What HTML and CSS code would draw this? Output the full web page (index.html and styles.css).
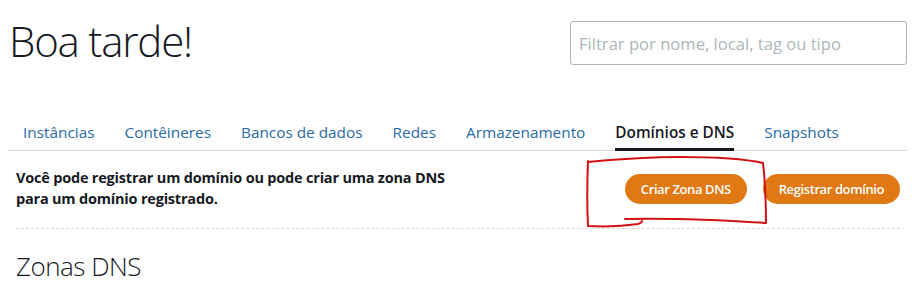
FILE: index.html
```html
<!DOCTYPE html>
<html lang="pt-BR">
<head>
<meta charset="utf-8">
<title>Lightsail - Domínios e DNS</title>
<link rel="stylesheet" href="styles.css">
</head>
<body>
<div class="page">
  <header class="header">
    <h1 class="greeting">Boa tarde!</h1>
    <input class="search" type="text" placeholder="Filtrar por nome, local, tag ou tipo">
  </header>
  <nav class="tabs">
    <a class="tab">Instâncias</a>
    <a class="tab">Contêineres</a>
    <a class="tab">Bancos de dados</a>
    <a class="tab">Redes</a>
    <a class="tab">Armazenamento</a>
    <a class="tab active">Domínios e DNS</a>
    <a class="tab">Snapshots</a>
  </nav>
  <section class="panel">
    <div class="intro">
      <p class="intro-text">Você pode registrar um domínio ou pode criar uma zona DNS<br>para um domínio registrado.</p>
      <div class="actions">
        <button class="btn">Criar Zona DNS</button>
        <button class="btn">Registrar domínio</button>
      </div>
    </div>
    <h2 class="section-title">Zonas DNS</h2>
  </section>
</div>
<svg class="annotation" width="923" height="286" viewBox="0 0 923 286" aria-hidden="true">
  <path d="M588 162 C 620 159, 650 157, 680 157 C 720 157, 745 159, 763 163" />
  <path d="M763 163 C 765 180, 766 205, 766 223" />
  <path d="M766 223 C 720 220, 670 218, 625 219" />
  <path d="M588 161 C 587 185, 587 205, 588 226 C 605 227, 625 226, 638 224 C 641 223, 642 222, 642 221" />
</svg>
</body>
</html>
```
FILE: styles.css
```css
* { box-sizing: border-box; }
html, body { margin: 0; padding: 0; background: #fff; }
body {
  font-family: "Open Sans", "Noto Sans", sans-serif;
  color: #16191f;
  position: relative;
  width: 923px;
  height: 286px;
  overflow: hidden;
}
.page {
  padding: 0 16px 0 8px;
}
.header {
  display: flex;
  justify-content: space-between;
  align-items: flex-start;
  padding-top: 21px;
}
.greeting {
  margin: -5px 0 0;
  font-size: 42px;
  font-weight: 300;
  line-height: 50px;
  letter-spacing: -1.2px;
  color: #16191f;
  padding-left: 1px;
}
.search {
  width: 337px;
  height: 44px;
  border: 1px solid #aab7b8;
  border-radius: 3px;
  padding: 0 8px;
  font-family: inherit;
  font-size: 16.6px;
  color: #16191f;
  outline: none;
}
.search::placeholder { color: #aab7b8; }
.tabs {
  display: flex;
  gap: 30px;
  padding-left: 15px;
  margin-top: 53px;
  border-bottom: 1px solid #d5dbdb;
}
.tab {
  font-size: 15.35px;
  line-height: 22px;
  color: #2a6aa2;
  padding: 2px 0 5px;
  border-bottom: 3px solid transparent;
  margin-bottom: -1px;
  text-decoration: none;
  white-space: nowrap;
}
.tab.active {
  color: #16191f;
  font-weight: 600;
  border-bottom-color: #16191f;
}
.panel {
  padding: 0 7px 0 8px;
}
.intro {
  display: flex;
  justify-content: space-between;
  align-items: center;
  padding: 16px 0 19px;
  border-bottom: 1px dashed #d5dbdb;
}
.intro-text {
  margin: 0;
  font-size: 14.5px;
  font-weight: 700;
  letter-spacing: -0.2px;
  line-height: 21px;
}
.actions {
  display: flex;
  gap: 16px;
  margin-top: 2px;
}
.btn {
  height: 30px;
  border: none;
  border-radius: 15px;
  background: #e07814;
  color: #fff;
  font-family: inherit;
  font-size: 13px;
  font-weight: 600;
  letter-spacing: -0.4px;
  padding: 0 16px;
}
.section-title {
  margin: 22px 0 0;
  font-size: 26px;
  font-weight: 300;
  letter-spacing: -0.5px;
  line-height: 30px;
  color: #16191f;
}
.annotation {
  position: absolute;
  left: 0;
  top: 0;
  pointer-events: none;
}
.annotation path {
  fill: none;
  stroke: #d40f14;
  stroke-width: 2;
  stroke-linecap: round;
}
```
